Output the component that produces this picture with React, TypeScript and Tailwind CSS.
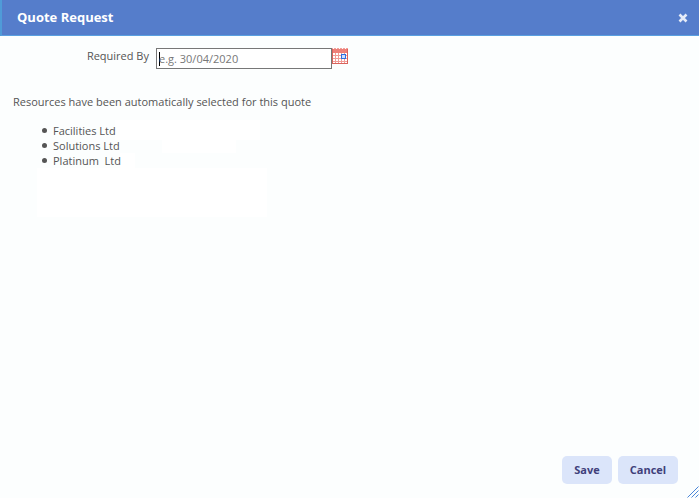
const companies = ["Facilities Ltd", "Solutions Ltd", "Platinum  Ltd"];

const CalendarIcon = () => (
  <svg width="16" height="16" viewBox="0 0 16 16" className="shrink-0" shapeRendering="crispEdges">
    <rect x="0" y="0" width="16" height="16" fill="#f2a19b" />
    <rect x="0" y="1" width="16" height="4" fill="#ee8079" />
    <path d="M1.5 0v1M4.5 0v1M7.5 0v1M10.5 0v1M13.5 0v1" stroke="#fff" strokeWidth="1" />
    <rect x="1" y="5" width="14" height="10" fill="#fff" />
    <path d="M3.5 5v10M6.5 5v10M9.5 5v10M12.5 5v10M1 7.5h14M1 10.5h14M1 13.5h14" stroke="#f29c96" strokeWidth="1" />
    <rect x="9" y="6" width="4" height="4" fill="#cfdfff" stroke="#2f6fe0" strokeWidth="1" />
    <path d="M0.5 1v14.5h15V1" fill="none" stroke="#d9635c" strokeWidth="1" />
  </svg>
);

const CloseIcon = () => (
  <svg width="10" height="10" viewBox="0 0 10 10">
    <path d="M1.5 1.5l7 7M8.5 1.5l-7 7" stroke="#e6ecf8" strokeWidth="2.6" />
  </svg>
);

const ResizeGrip = () => (
  <svg width="12" height="12" viewBox="0 0 12 12" className="absolute bottom-0 right-0">
    <path d="M0.5 11.5L11.5 0.5M4.5 11.5L11.5 4.5M8.5 11.5L11.5 8.5" stroke="#4a86d8" strokeWidth="1" />
  </svg>
);

const App = () => {
  return (
    <main className="relative flex h-[498px] w-[699px] flex-col overflow-hidden bg-[#fcfefe] font-['Open_Sans',sans-serif] text-[11px] text-[#555]">
      <header className="flex h-[36px] shrink-0 items-center justify-between border-b border-[#5aa0e0] border-l-2 border-l-[#4f9bd8] bg-[#557dcb] pl-[15px] pr-[11px]">
        <h1 className="pt-px text-[13px] font-bold text-white">Quote Request</h1>
        <CloseIcon />
      </header>

      <section className="flex flex-1 flex-col">
        <div className="mt-[12px] flex h-[22px] items-start">
          <label className="w-[149px] text-right leading-[16px]">Required By</label>
          <div className="ml-[7px] flex h-[21px] w-[176px] items-center border border-[#777] bg-white pl-[2px] text-[#777]">
            <span className="mr-[-1px] h-[14px] w-px bg-black" />
            <span className="pt-[2px]">e.g. 30/04/2020</span>
          </div>
          <CalendarIcon />
        </div>

        <p className="ml-[13px] mt-[24px] leading-[16px]">Resources have been automatically selected for this quote</p>

        <div className="relative mt-[13px]">
          <div className="absolute left-[115px] top-[-3px] h-[20px] w-[145px] bg-white" />
          <div className="absolute left-[162px] top-[17px] h-[13px] w-[74px] bg-white" />
          <div className="absolute left-[120px] top-[30px] h-[15px] w-[15px] bg-white" />
          <div className="absolute left-[37px] top-[45px] h-[49px] w-[230px] bg-white" />
          <ul className="relative leading-[15px]">
            {companies.map((company) => (
              <li key={company} className="flex items-center gap-[6px] whitespace-pre pl-[42px]">
                <span className="h-[5px] w-[5px] rounded-full bg-[#555]" />
                {company}
              </li>
            ))}
          </ul>
        </div>
      </section>

      <footer className="flex justify-end gap-[6px] pb-[14px] pr-[21px]">
        <button className="h-[28px] w-[50px] rounded-[5px] bg-[#dbe5fa] text-[11px] font-bold text-[#40407a]">Save</button>
        <button className="h-[28px] w-[60px] rounded-[5px] bg-[#dbe5fa] text-[11px] font-bold text-[#40407a]">Cancel</button>
      </footer>
      <ResizeGrip />
    </main>
  );
};

export default App;
